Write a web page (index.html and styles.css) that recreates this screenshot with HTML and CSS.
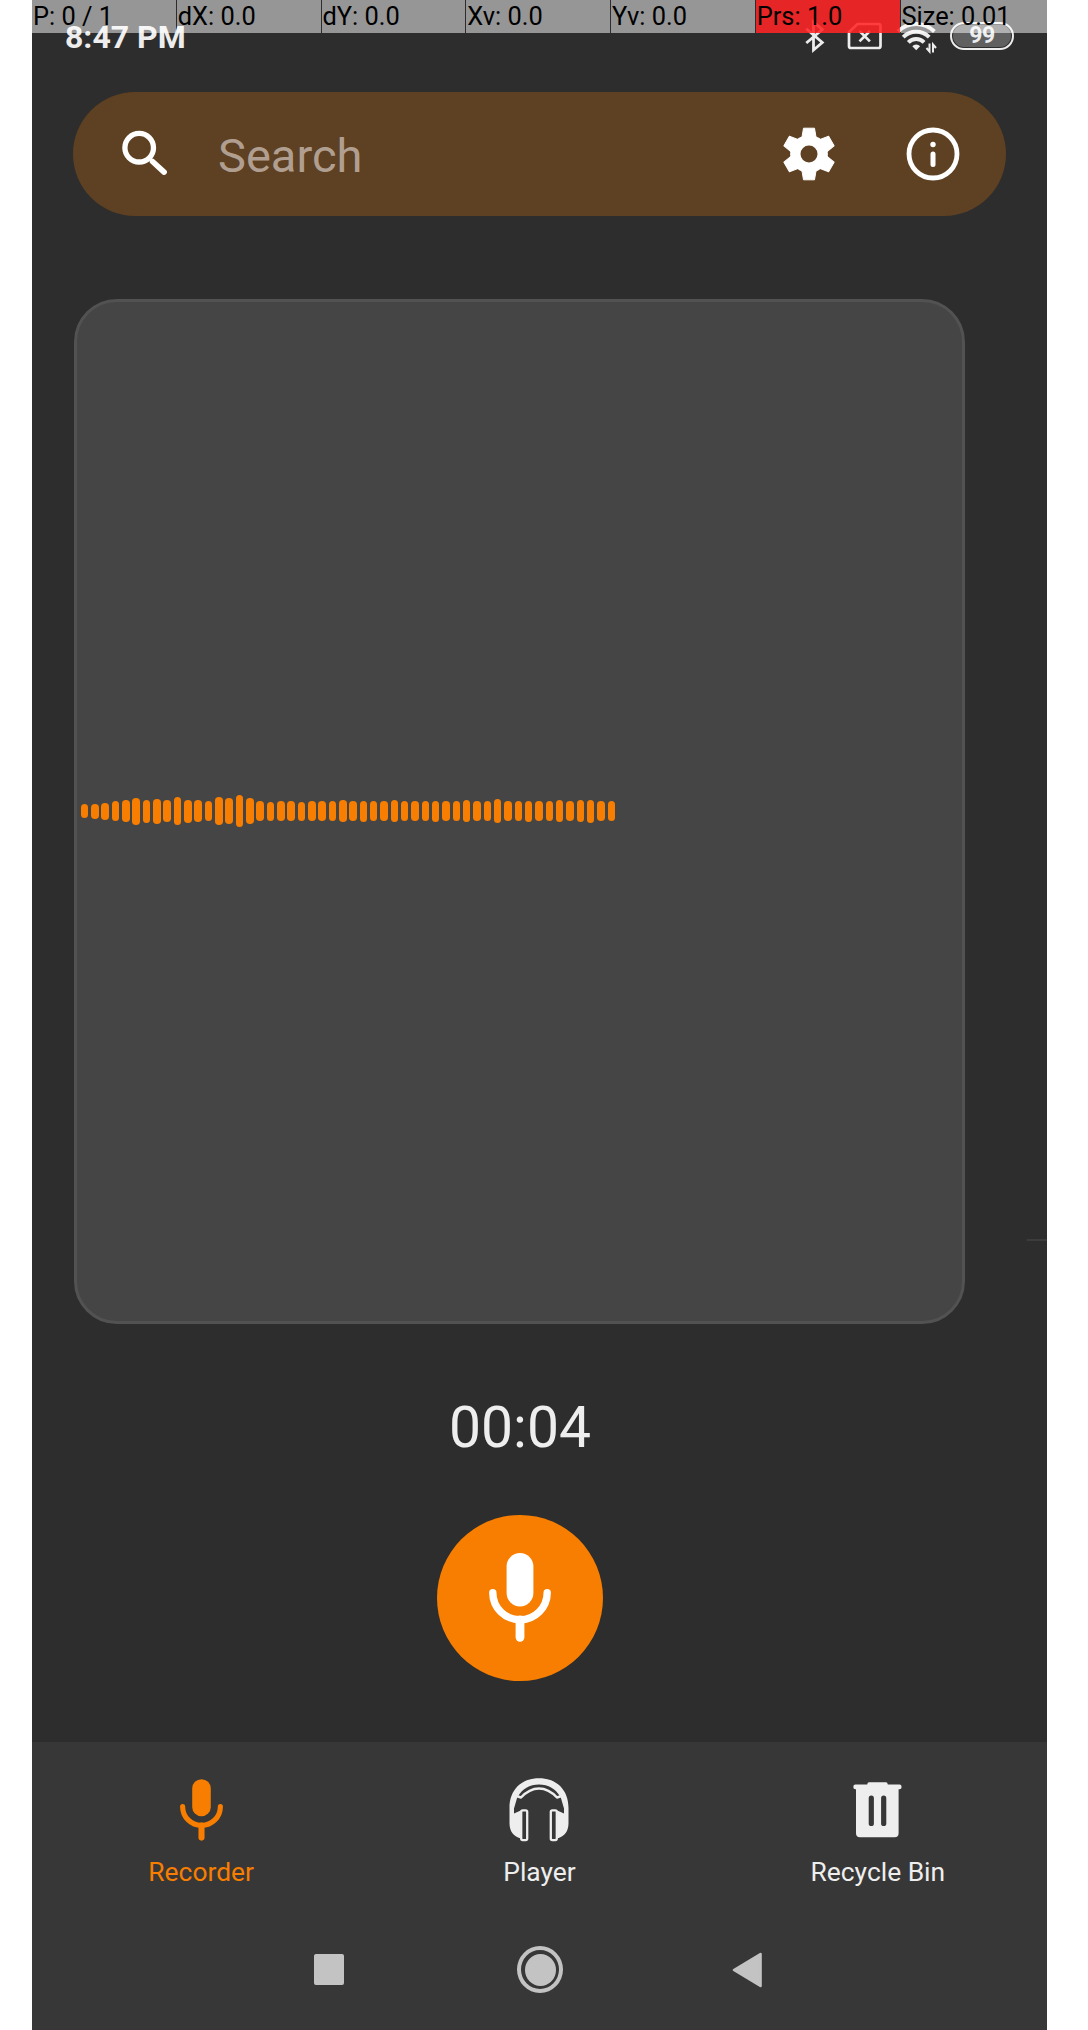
FILE: index.html
```html
<!DOCTYPE html>
<html lang="en">
<head>
<meta charset="utf-8">
<title>Recorder</title>
<link rel="stylesheet" href="styles.css">
</head>
<body>
<svg class="defs" aria-hidden="true">
  <symbol id="mic" viewBox="0 0 62 89">
    <rect x="17.6" y="0" width="26.8" height="53.4" rx="13.4" fill="currentColor"/>
    <path d="M3.8 39.7a27.2 27 0 0 0 54.4 0" fill="none" stroke="currentColor" stroke-width="7.4" stroke-linecap="round"/>
    <path d="M31 67v17.3" stroke="currentColor" stroke-width="8.8" stroke-linecap="round"/>
  </symbol>
</svg>
<div class="phone">
  <header class="status">
    <span class="clock">8:47 PM</span>
    <div class="status-icons">
      <svg width="22" height="36" viewBox="804 18 22 36"><path d="M806.300 28.800 822.300 42.500 813.500 50V22l8.800 7.500-16 13.500" fill="none" stroke="currentColor" stroke-width="2.8"/></svg>
      <svg class="sim" width="37" height="36" viewBox="847 18 37 36"><path d="M857.500 24h21a2 2 0 0 1 2 2v20a2 2 0 0 1-2 2h-27.500a2 2 0 0 1-2-2V32Z" fill="none" stroke="currentColor" stroke-width="2.700"/><path d="m859.500 31 10.400 10.400m0-10.400-10.400 10.400" stroke="currentColor" stroke-width="2.700"/></svg>
      <svg class="wifi" width="42" height="36" viewBox="897 18 42 36"><path d="M917.200 50.300l-3.900-4a5 5 0 0 1 7.800 0Z" fill="currentColor"/><g fill="none" stroke="currentColor" stroke-width="3.900"><path d="M909.300 42.300a11 11 0 0 1 15.800 0"/><path d="M904.200 37.200a18.400 18.400 0 0 1 26 0"/><path d="M899 31.500a26 26 0 0 1 36.400 0"/></g><path d="M930.500 43.500v8l-3-3.500M934 52.500v-8l3 3.500" fill="none" stroke="currentColor" stroke-width="2"/></svg>
      <span class="battery"><span class="level">99</span></span>
    </div>
  </header>
  <div class="pointer-bar">
    <span>P: 0 / 1</span><span>dX: 0.0</span><span>dY: 0.0</span><span>Xv: 0.0</span><span>Yv: 0.0</span><span class="pressed">Prs: 1.0</span><span>Size: 0.01</span>
  </div>

  <div class="search">
    <svg class="lens" width="48" height="48" viewBox="120 129 48 48" fill="none" stroke="currentColor"><circle cx="139.200" cy="147.700" r="14.300" stroke-width="5.300"/><path d="m152.500 161.500 11.600 10.600" stroke-width="5.600" stroke-linecap="round"/></svg>
    <span class="hint">Search</span>
    <svg class="gear" width="54" height="54" viewBox="-27 -27 54 54">
      <circle r="13.700" fill="none" stroke="currentColor" stroke-width="10.400"/>
      <g fill="currentColor" stroke="currentColor" stroke-linejoin="round">
        <path id="tooth" d="M-6.900-15v-2.500L-5.500-25.800h11L6.900-17.500V-15Z"/>
        <use href="#tooth" transform="rotate(60)"/><use href="#tooth" transform="rotate(120)"/><use href="#tooth" transform="rotate(180)"/><use href="#tooth" transform="rotate(240)"/><use href="#tooth" transform="rotate(300)"/>
      </g>
    </svg>
    <svg class="info" width="54" height="54" viewBox="-27 -27 54 54"><circle r="24" fill="none" stroke="currentColor" stroke-width="4.800"/><circle cy="-9.500" r="2.700" fill="currentColor"/><path d="M0 0v10.500" stroke="currentColor" stroke-width="5" stroke-linecap="round"/></svg>
  </div>

  <main class="stage">
    <section class="panel">
      <div class="wave">
        <i style="height:14px"></i><i style="height:15px"></i><i style="height:17px"></i><i style="height:20px"></i><i style="height:22px"></i><i style="height:27px"></i><i style="height:23px"></i><i style="height:25px"></i><i style="height:22px"></i><i style="height:28px"></i><i style="height:23px"></i><i style="height:22px"></i><i style="height:20.5px"></i><i style="height:28px"></i><i style="height:26px"></i><i style="height:32px"></i><i style="height:26px"></i><i style="height:20px"></i><i style="height:19px"></i><i style="height:20px"></i><i style="height:20px"></i><i style="height:19px"></i><i style="height:20px"></i><i style="height:20.5px"></i><i style="height:20.5px"></i><i style="height:21.500px"></i><i style="height:20px"></i><i style="height:21px"></i><i style="height:19.500px"></i><i style="height:20.5px"></i><i style="height:22px"></i><i style="height:19.500px"></i><i style="height:19.500px"></i><i style="height:20.5px"></i><i style="height:21px"></i><i style="height:20.5px"></i><i style="height:20.5px"></i><i style="height:22px"></i><i style="height:20.5px"></i><i style="height:20px"></i><i style="height:24px"></i><i style="height:20.5px"></i><i style="height:20.5px"></i><i style="height:21px"></i><i style="height:20px"></i><i style="height:20.5px"></i><i style="height:22px"></i><i style="height:20px"></i><i style="height:22px"></i><i style="height:23px"></i><i style="height:20px"></i><i style="height:20px"></i>
      </div>
    </section>
    <div class="next-edge"></div>
  </main>
  <div class="controls">
    <div class="timer">00:04</div>
    <div class="record"><svg width="62" height="89"><use href="#mic"/></svg></div>
  </div>

  <footer class="bottom">
    <nav class="tabs">
      <div class="tab active">
        <svg width="43" height="62"><use href="#mic"/></svg>
        <span>Recorder</span>
      </div>
      <div class="tab">
        <svg width="60" height="64" viewBox="508.800 1778 60 64">
          <g id="half-phones">
            <path d="M538.800 1778.300C521 1778.300 509.300 1790 509.300 1808V1823C509.300 1831 513 1836.500 520.500 1838.500V1810.500L513.800 1813.500V1808.500L517 1797.500C522 1789 529.500 1784.600 538.800 1784.600Z" fill="currentColor"/>
            <rect x="521" y="1810.300" width="6" height="29.800" rx="1.500" fill="none" stroke="currentColor" stroke-width="2.300"/>
            <path d="M517 1796.200 520.800 1797.500C526 1791.800 532 1788.400 538.800 1788.400" fill="none" stroke="currentColor" stroke-width="2.500" stroke-linejoin="round"/>
          </g>
          <use href="#half-phones" transform="matrix(-1 0 0 1 1077.600 0)"/>
        </svg>
        <span>Player</span>
      </div>
      <div class="tab">
        <svg width="49" height="64" viewBox="853 1778 49 64"><path fill="currentColor" fill-rule="evenodd" d="M869 1782.200h17q1.500 0 1.800 2.400h11.700q2.100 0 2.100 2.300t-2.100 2.300h-.9v44q0 4-4 4h-34.600q-4 0-4-4v-44h-.6q-2.100 0-2.100-2.300t2.100-2.300h11.800q.3-2.400 1.800-2.400Zm-.3 16v25.200a2.600 2.600 0 0 0 5.200 0v-25.200a2.600 2.600 0 0 0-5.200 0Zm12.400 0v25.200a2.600 2.600 0 0 0 5.200 0v-25.200a2.600 2.600 0 0 0-5.200 0Z"/></svg>
        <span>Recycle Bin</span>
      </div>
    </nav>
    <div class="system-nav">
      <span class="recents"></span>
      <span class="home"></span>
      <svg class="back" width="30" height="36" viewBox="0 0 30 36"><path d="M2 18 28.500 2v32Z" fill="currentColor" stroke="currentColor" stroke-width="2.600" stroke-linejoin="round"/></svg>
    </div>
  </footer>
</div>
</body>
</html>
```
FILE: styles.css
```css
* { box-sizing: border-box; }
body {
  margin: 0;
  background: #fff;
  font-family: Roboto, sans-serif;
}
svg { display: block; flex: none; }
.defs { position: absolute; width: 0; height: 0; }

.phone {
  position: relative;
  display: flex;
  flex-direction: column;
  width: 1015px;
  height: 2030px;
  margin-left: 32px;
  background: #2d2d2d;
  overflow: hidden;
}

/* status bar */
.status {
  display: flex;
  justify-content: space-between;
  height: 92px;
  padding: 18px 33px 0 33px;
  color: #ededed;
}
.clock {
  font-size: 32px;
  font-weight: 700;
  line-height: 39px;
  white-space: nowrap;
}
.status-icons { display: flex; align-items: flex-start; }
.sim { margin-left: 21px; }
.wifi { margin-left: 12px; }
.battery {
  width: 64px;
  height: 28px;
  margin: 4px 0 0 12px;
  padding: 1px;
  border: 2.5px solid #ededed;
  border-radius: 14px;
}
.level {
  display: block;
  height: 100%;
  border-radius: 11px;
  background: #606060;
  font-size: 23px;
  font-weight: 700;
  line-height: 22.5px;
  letter-spacing: -.5px;
  text-align: center;
}

/* pointer readout drawn over the status bar */
.pointer-bar {
  position: absolute;
  top: 0;
  left: 0;
  display: flex;
  gap: 1px;
  width: 100%;
  height: 33px;
}
.pointer-bar span {
  flex: 0 0 143.75px;
  padding-left: 1px;
  background: rgba(255, 255, 255, .5);
  color: #000;
  font-size: 25.4px;
  line-height: 33px;
  white-space: nowrap;
}
.pointer-bar span:last-child { flex: 1; }
.pointer-bar .pressed { background: rgba(255, 36, 38, .88); }

/* search */
.search {
  display: flex;
  align-items: center;
  height: 124px;
  margin: 0 41px;
  padding: 0 46px 0 47px;
  border-radius: 62px;
  background: #5e4022;
  color: #fff;
}
.lens { margin-top: -2px; }
.hint {
  flex: 1;
  padding: 3px 0 0 50px;
  color: #b09f90;
  font-size: 47px;
  line-height: 56px;
}
.info { margin-left: 70px; }

/* waveform pager */
.stage {
  display: flex;
  justify-content: space-between;
  height: 1025px;
  margin: 83px 0 0 42px;
}
.panel {
  width: 891px;
  border: 3px solid #525252;
  border-radius: 43px;
  background: #454545;
}
.wave {
  display: flex;
  align-items: center;
  gap: 2.84px;
  height: 100%;
  padding: 0 0 1px 3.8px;
}
.wave i {
  flex: 0 0 7.5px;
  border-radius: 3.75px;
  background: #f77e00;
}
.next-edge {
  width: 20px;
  height: 2px;
  margin-top: 940px;
  background: #3c3c3c;
}

.controls {
  display: flex;
  flex-direction: column;
  align-items: center;
  width: 976px;
}
.timer {
  margin-top: 70px;
  color: #eee;
  font-size: 57px;
  line-height: 68px;
}
.record {
  width: 166px;
  height: 166px;
  margin-top: 53px;
  padding: 38px 52px;
  border-radius: 50%;
  background: #f77e00;
  color: #fff;
}

/* bottom area */
.bottom {
  height: 288px;
  margin-top: auto;
  background: #373737;
}
.tabs { display: flex; height: 168px; }
.tab {
  display: flex;
  flex: 1;
  flex-direction: column;
  align-items: center;
  padding-top: 36px;
  color: #eee;
  font-size: 26.4px;
  line-height: 32px;
}
.tab span { margin-top: auto; padding-bottom: 22px; }
.tab.active { color: #f77e00; }
.tab.active svg { margin-top: 1px; }
.system-nav {
  display: flex;
  align-items: center;
  height: 119px;
  padding-left: 282px;
  color: #c3c3c3;
}
.recents {
  width: 30px;
  height: 31px;
  border-radius: 2px;
  background: #c3c3c3;
}
.home {
  width: 46px;
  height: 47px;
  margin-left: 173px;
  border: 4px solid #c3c3c3;
  border-radius: 50%;
  padding: 3.500px;
  background: #c3c3c3 content-box;
}
.back { margin-left: 169px; }
```
